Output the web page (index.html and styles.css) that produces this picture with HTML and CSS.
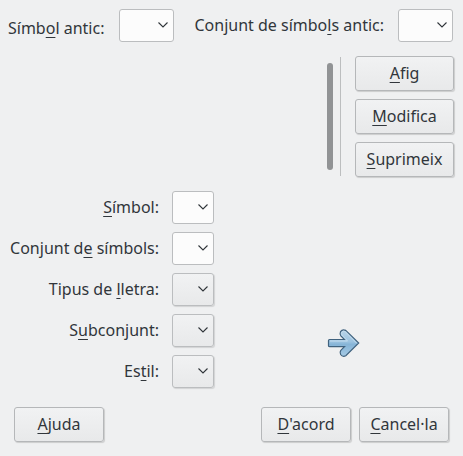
FILE: index.html
```html
<!DOCTYPE html>
<html lang="ca">
<head>
<meta charset="utf-8">
<title>Substitució de símbols</title>
<link rel="stylesheet" href="styles.css">
</head>
<body>
<form class="dialog">
  <div class="search-row">
    <label class="old-symbol" for="old-symbol">Símb<u>o</u>l antic:</label>
    <select class="combo editable wide" id="old-symbol"></select>
    <label class="old-set" for="old-set">Conjunt de símbo<u>l</u>s antic:</label>
    <select class="combo editable wide" id="old-set"></select>
  </div>

  <div class="list-row">
    <div class="symbol-list"><div class="scroll-thumb"></div></div>
    <div class="actions">
      <button class="button" type="button"><span><u>A</u>fig</span></button>
      <button class="button" type="button"><span><u>M</u>odifica</span></button>
      <button class="button" type="button"><span><u>S</u>uprimeix</span></button>
    </div>
  </div>

  <div class="details">
    <div class="fields">
      <label for="symbol"><u>S</u>ímbol:</label>
      <select class="combo editable" id="symbol"></select>
      <label for="set">Conjunt d<u>e</u> símbols:</label>
      <select class="combo editable" id="set"></select>
      <label for="font">Tipus de <u>l</u>letra:</label>
      <select class="combo" id="font"></select>
      <label for="subset">S<u>u</u>bconjunt:</label>
      <select class="combo" id="subset"></select>
      <label for="style">Es<u>t</u>il:</label>
      <select class="combo" id="style"></select>
    </div>
    <div class="preview">
      <svg class="arrow" width="34" height="30" viewBox="0 0 34 30" aria-hidden="true">
        <defs>
          <linearGradient id="arrow-fill" x1="0" y1="0" x2="0" y2="1">
            <stop offset="0" stop-color="#b9d5e9"/>
            <stop offset="0.45" stop-color="#9cc3e0"/>
            <stop offset="0.55" stop-color="#86b4d7"/>
            <stop offset="1" stop-color="#a5cae5"/>
          </linearGradient>
        </defs>
        <path d="M2.5 11.5H17.5L13.8 7.8Q12.5 6.2 13.5 3.6Q15.5 .8 18.8 2.4L31.7 15L18.8 27.8Q15.5 29.2 13.6 26.5Q12.5 24 13.8 22.3L17.5 18.7H2.5Q1.5 18.7 1.5 17.7V12.5Q1.5 11.5 2.5 11.5Z" fill="url(#arrow-fill)" stroke="#40627e" stroke-width="1.2"/>
        <path d="M3 13H20.5L15 7Q14 5.3 15 4Q16.3 2.7 18 3.5L29.5 15" fill="none" stroke="#c4dcee" stroke-width="1"/>
      </svg>
    </div>
  </div>

  <div class="footer">
    <button class="button" type="button"><span><u>A</u>juda</span></button>
    <span class="spacer"></span>
    <button class="button" type="submit"><span><u>D</u>'acord</span></button>
    <button class="button" type="button"><span><u>C</u>ancel·la</span></button>
  </div>
</form>
</body>
</html>
```
FILE: styles.css
```css
* {
  box-sizing: border-box;
}

body {
  margin: 0;
  background: #eff0f1;
  color: #31363b;
  font: 16px/22px "Noto Sans", sans-serif;
  font-feature-settings: "locl" 0;
}

u {
  text-decoration: underline 1px;
  text-underline-offset: 3px;
  text-decoration-skip-ink: none;
}

label {
  padding-bottom: 2px;
  white-space: nowrap;
}

.dialog {
  padding: 9px 9px 14px 8px;
}

.search-row {
  display: flex;
  align-items: center;
  padding-right: 1px;
}

.search-row .combo {
  margin-left: 14px;
}

.old-symbol {
  padding: 4px 1px 0 0;
}

.old-set {
  margin-left: auto;
}

.combo {
  appearance: none;
  width: 42px;
  height: 33px;
  margin: 0;
  border: 1px solid #bbbdbf;
  border-radius: 3px;
  background:
    url("data:image/svg+xml,%3Csvg xmlns='http://www.w3.org/2000/svg' width='10' height='7'%3E%3Cpath d='M.5 .5L5 5L9.5 .5' fill='none' stroke='%2331363b' stroke-width='1.1'/%3E%3C/svg%3E") no-repeat right 5px center,
    linear-gradient(#f1f2f3, #e8e9ea);
  box-shadow: 1px 1px 1px rgba(0, 0, 0, 0.12);
}

.combo.editable {
  background-image: url("data:image/svg+xml,%3Csvg xmlns='http://www.w3.org/2000/svg' width='10' height='7'%3E%3Cpath d='M.5 .5L5 5L9.5 .5' fill='none' stroke='%2331363b' stroke-width='1.1'/%3E%3C/svg%3E");
  background-color: #fcfcfc;
  box-shadow: none;
}

.combo.wide {
  width: 55px;
}

.list-row {
  display: flex;
  gap: 14px;
  margin-top: 14px;
}

.symbol-list {
  display: flex;
  flex: 1;
  justify-content: flex-end;
  margin: 1px 0;
  padding: 6px 7px 6px 0;
  border-right: 1px solid #bcbebf;
}

.scroll-thumb {
  width: 6px;
  border-radius: 3px;
  background: #919395;
}

.actions {
  display: flex;
  flex-direction: column;
  gap: 8px;
  width: 99px;
}

.button {
  height: 35px;
  padding: 0 0 2px;
  border: 1px solid #b5b7b9;
  border-radius: 3px;
  background: linear-gradient(#f1f2f3, #e8e9ea);
  box-shadow: 1px 1px 1px rgba(0, 0, 0, 0.15);
  color: inherit;
  font: inherit;
  font-feature-settings: inherit;
}

.details {
  display: flex;
  margin-top: 14px;
}

.fields {
  display: grid;
  grid-template-columns: 151px auto;
  gap: 8px 13px;
  align-items: center;
  text-align: right;
}

.preview {
  display: flex;
  flex: 1;
  align-items: flex-end;
  justify-content: center;
  padding: 0 0 30px 20px;
}

.footer {
  display: flex;
  gap: 8px;
  margin-top: 19px;
  padding: 0 5px 0 6px;
}

.footer .button {
  width: 90px;
}

.spacer {
  flex: 1;
}
```
